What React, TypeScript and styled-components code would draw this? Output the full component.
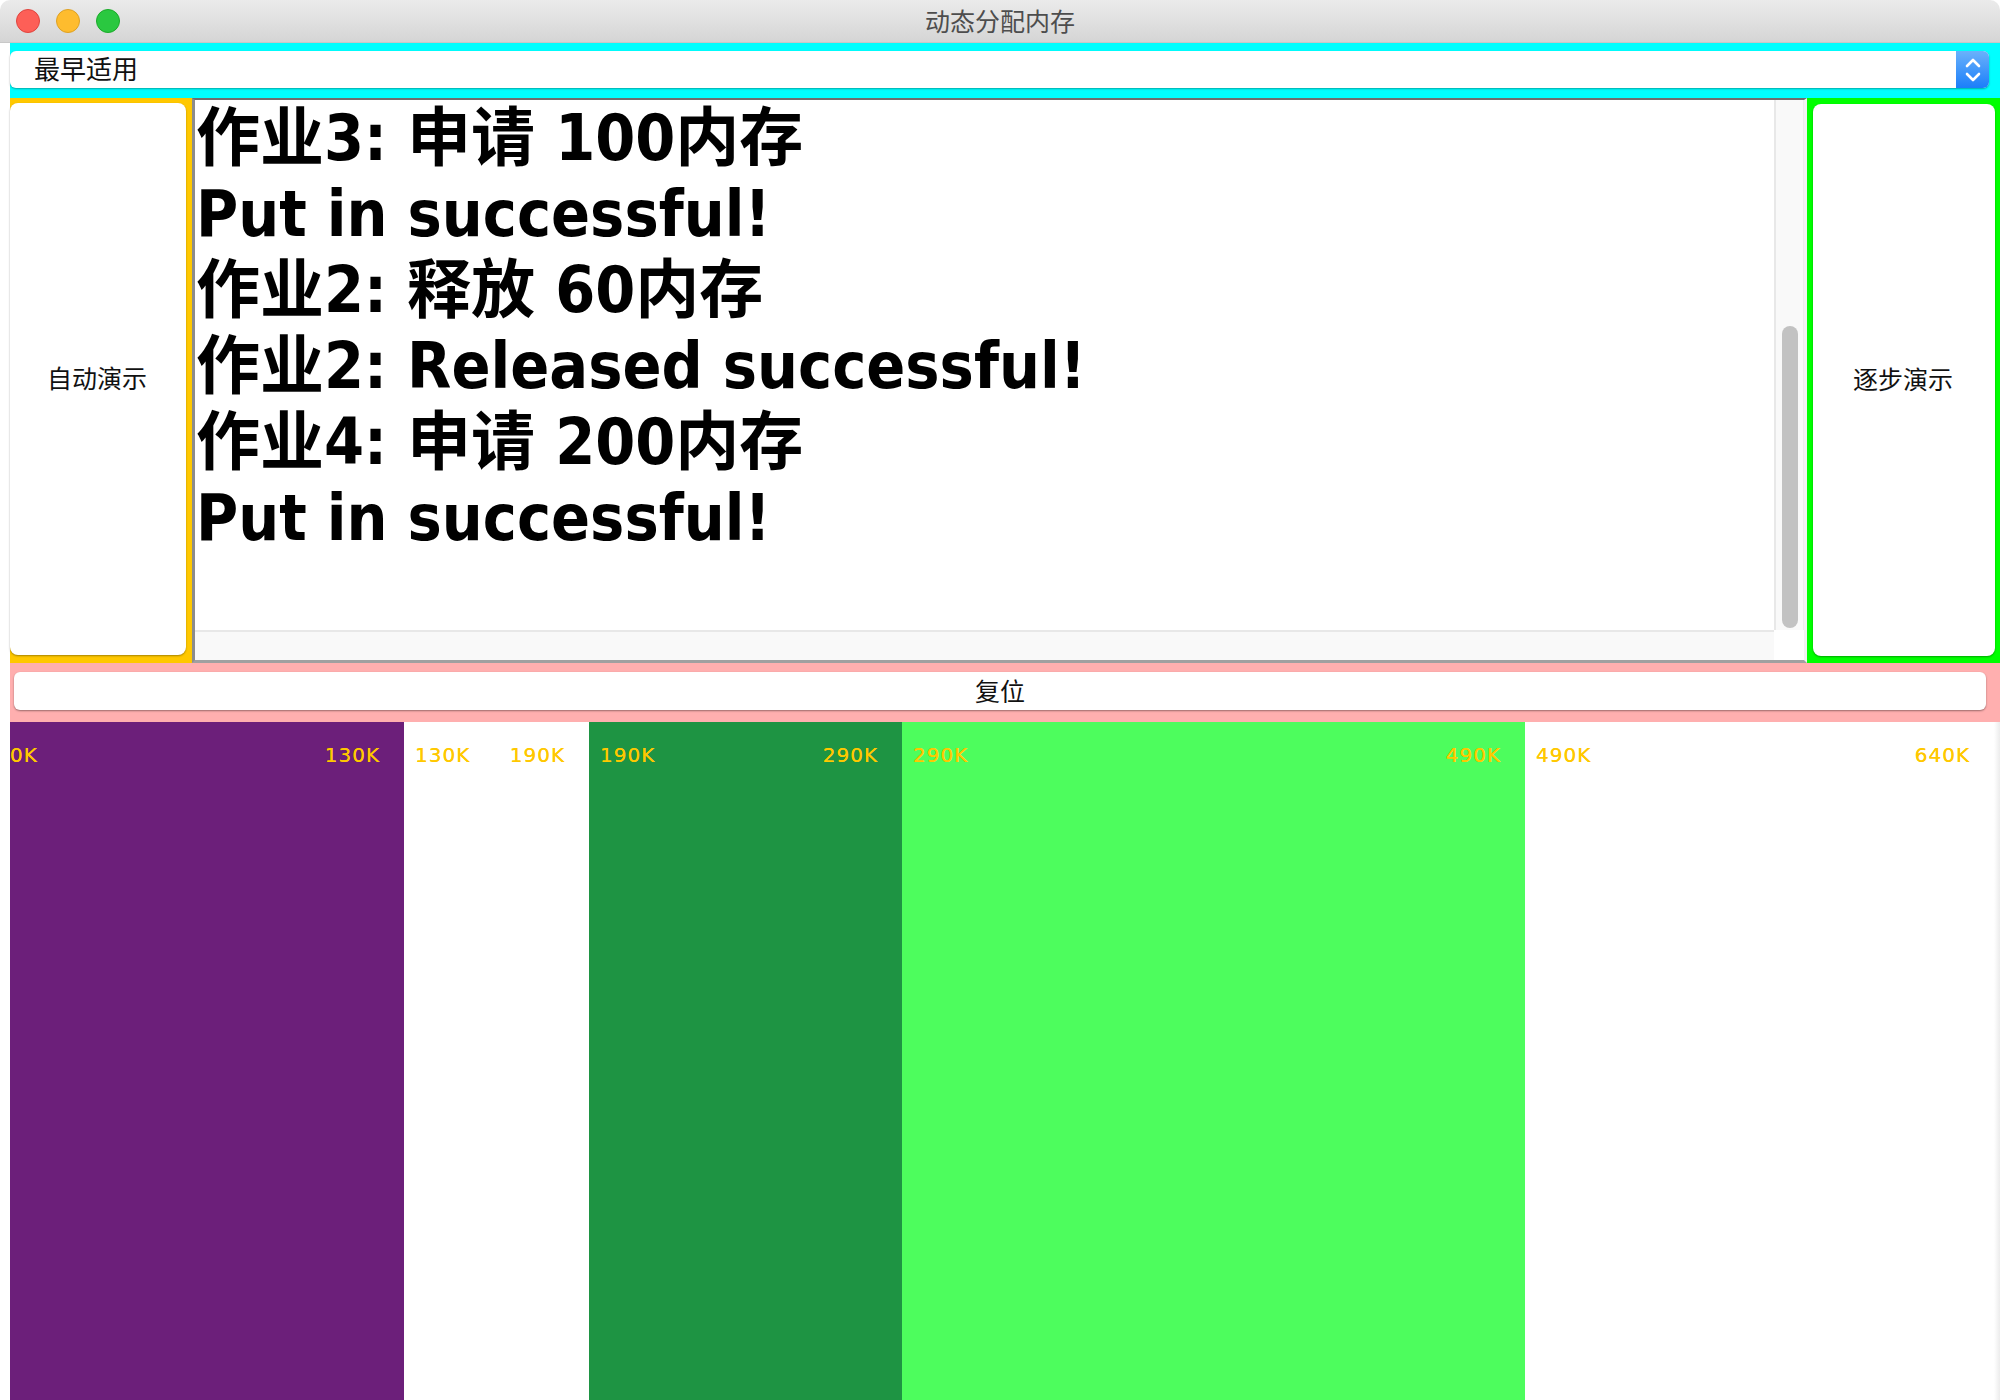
import React from "react";
import styled, { createGlobalStyle } from "styled-components";

const GlobalStyle = createGlobalStyle`
  html, body {
    margin: 0;
    padding: 0;
    background: #ffffff;
  }
  * {
    box-sizing: border-box;
  }
`;

const UI_FONT = `"Noto Sans CJK SC", "Noto Sans", sans-serif`;

const Window = styled.div`
  width: 2000px;
  height: 1400px;
  display: flex;
  flex-direction: column;
  overflow: hidden;
  background: #ffffff;
`;

const TitleBar = styled.div`
  height: 43px;
  flex: none;
  display: flex;
  align-items: center;
  position: relative;
  padding-left: 16px;
  gap: 16px;
  border-radius: 10px 10px 0 0;
  background: linear-gradient(#ebebeb, #d5d5d5);
  border-bottom: 1px solid #c8c8c8;
`;

const Light = styled.span<{ $c: string; $edge: string }>`
  width: 24px;
  height: 24px;
  border-radius: 50%;
  background: ${(p) => p.$c};
  border: 1px solid ${(p) => p.$edge};
`;

const Title = styled.div`
  position: absolute;
  left: 0;
  right: 0;
  top: 0;
  bottom: 0;
  display: flex;
  align-items: center;
  justify-content: center;
  padding-bottom: 2px;
  font-family: ${UI_FONT};
  font-size: 25px;
  color: #4d4d4d;
  pointer-events: none;
`;

const Body = styled.div`
  flex: 1;
  display: flex;
  flex-direction: column;
  padding-left: 10px;
`;

const NorthPanel = styled.div`
  height: 55px;
  flex: none;
  background: #00ffff;
  padding: 8px 11px 10px 0;
`;

const Combo = styled.div`
  height: 100%;
  display: flex;
  align-items: center;
  background: #ffffff;
  border-radius: 6px;
  box-shadow: 0 1px 2px rgba(0, 0, 0, 0.35);
`;

const ComboText = styled.div`
  flex: 1;
  padding: 0 0 3px 24px;
  font-family: ${UI_FONT};
  font-size: 26px;
  line-height: 30px;
  color: #111111;
`;

const Stepper = styled.div`
  width: 33px;
  height: 100%;
  display: flex;
  align-items: center;
  justify-content: center;
  border-radius: 0 6px 6px 0;
  background: linear-gradient(#6ab2fb, #1b7efa);
`;

const MiddleRow = styled.div`
  height: 565px;
  flex: none;
  display: flex;
`;

const SidePanel = styled.div<{ $bg: string; $w: number; $pad: string }>`
  width: ${(p) => p.$w}px;
  flex: none;
  background: ${(p) => p.$bg};
  padding: ${(p) => p.$pad};
  display: flex;
`;

const BigButton = styled.div`
  flex: 1;
  display: flex;
  align-items: center;
  justify-content: center;
  background: #ffffff;
  border-radius: 8px;
  box-shadow: 0 1px 2px rgba(0, 0, 0, 0.35);
  font-family: ${UI_FONT};
  font-size: 25px;
  color: #111111;
  padding: 0 2px 4px 0;
`;

const ScrollPane = styled.div`
  flex: 1;
  display: grid;
  grid-template-columns: 1fr 30px;
  grid-template-rows: 1fr 30px;
  border-top: 2px solid #6e6e6e;
  border-left: 3px solid #8c8c8c;
  border-bottom: 3px solid #a0a0a0;
  border-right: 3px solid #f2f2f2;
  background: #ffffff;
`;

const TextArea = styled.div`
  padding: 0 0 0 1px;
  overflow: hidden;
  font-family: "DejaVu Sans Condensed", "DejaVu Sans", "Noto Sans CJK SC", sans-serif;
  font-stretch: condensed;
  font-weight: bold;
  font-size: 64px;
  line-height: 76px;
  color: #000000;
  white-space: pre;
`;

const VTrack = styled.div`
  background: #f9f9f9;
  border-left: 2px solid #e8e8e8;
  border-right: 1px solid #ececec;
  display: flex;
  flex-direction: column;
  justify-content: flex-end;
  align-items: center;
  padding: 0 0 2px 0;
`;

const Thumb = styled.div`
  width: 16px;
  height: 302px;
  border-radius: 8px;
  background: #c2c2c2;
`;

const HTrack = styled.div`
  background: #f9f9f9;
  border-top: 2px solid #e8e8e8;
`;

const Corner = styled.div`
  background: #ffffff;
`;

const SouthPanel = styled.div`
  height: 59px;
  flex: none;
  background: #ffafaf;
  padding: 9px 14px 12px 4px;
  display: flex;
`;

const ResetButton = styled.div`
  flex: 1;
  display: flex;
  align-items: center;
  justify-content: center;
  background: #ffffff;
  border-radius: 6px;
  box-shadow: 0 1px 2px rgba(0, 0, 0, 0.4);
  font-family: ${UI_FONT};
  font-size: 25px;
  color: #111111;
  padding-bottom: 2px;
`;

const MemoryRow = styled.div`
  flex: 1;
  display: flex;
  background: #ffffff;
`;

const Block = styled.div<{ $bg: string; $w: number; $first?: boolean }>`
  width: ${(p) => p.$w}px;
  flex: none;
  background: ${(p) => p.$bg};
  display: flex;
  justify-content: space-between;
  align-items: flex-start;
  padding: 21px 24px 0 ${(p) => (p.$first ? 0 : 11)}px;
`;

const Label = styled.span`
  font-family: "DejaVu Sans", sans-serif;
  font-size: 20px;
  letter-spacing: 1px;
  color: #ffc800;
  line-height: 24px;
  -webkit-font-smoothing: none;
  text-shadow: 0 0 0.4px #ffc800;
`;

const RightEdge = styled.div`
  flex: 1;
  background: linear-gradient(90deg, #ffffff, #ececec);
`;

const lines = [
  "作业3: 申请 100内存",
  "Put in successful!",
  "作业2: 释放 60内存",
  "作业2: Released successful!",
  "作业4: 申请 200内存",
  "Put in successful!",
];

const blocks = [
  { from: "0K", to: "130K", w: 394, bg: "#6c1f7a" },
  { from: "130K", to: "190K", w: 185, bg: "#ffffff" },
  { from: "190K", to: "290K", w: 313, bg: "#1e9443" },
  { from: "290K", to: "490K", w: 623, bg: "#4dfd5d" },
  { from: "490K", to: "640K", w: 469, bg: "#ffffff" },
];

export default function App() {
  return (
    <Window>
      <GlobalStyle />
      <TitleBar>
        <Light $c="#fd5f57" $edge="#e0443e" />
        <Light $c="#febc2e" $edge="#dea123" />
        <Light $c="#2ac840" $edge="#1aab29" />
        <Title>动态分配内存</Title>
      </TitleBar>
      <Body>
        <NorthPanel>
          <Combo>
            <ComboText>最早适用</ComboText>
            <Stepper>
              <svg width="18" height="26" viewBox="0 0 18 26" fill="none" stroke="#ffffff" strokeWidth="2.6" strokeLinecap="round" strokeLinejoin="round">
                <path d="M3 9 L9 3 L15 9" />
                <path d="M3 17 L9 23 L15 17" />
              </svg>
            </Stepper>
          </Combo>
        </NorthPanel>
        <MiddleRow>
          <SidePanel $bg="#ffc800" $w={182} $pad="5px 6px 8px 0">
            <BigButton>自动演示</BigButton>
          </SidePanel>
          <ScrollPane>
            <TextArea>
              {lines.map((l, i) => (
                <div key={i}>{l}</div>
              ))}
            </TextArea>
            <VTrack>
              <Thumb />
            </VTrack>
            <HTrack />
            <Corner />
          </ScrollPane>
          <SidePanel $bg="#00ff00" $w={193} $pad="6px 5px 7px 6px">
            <BigButton>逐步演示</BigButton>
          </SidePanel>
        </MiddleRow>
        <SouthPanel>
          <ResetButton>复位</ResetButton>
        </SouthPanel>
        <MemoryRow>
          {blocks.map((b, i) => (
            <Block key={i} $bg={b.bg} $w={b.w} $first={i === 0}>
              <Label>{b.from}</Label>
              <Label>{b.to}</Label>
            </Block>
          ))}
          <RightEdge />
        </MemoryRow>
      </Body>
    </Window>
  );
}
